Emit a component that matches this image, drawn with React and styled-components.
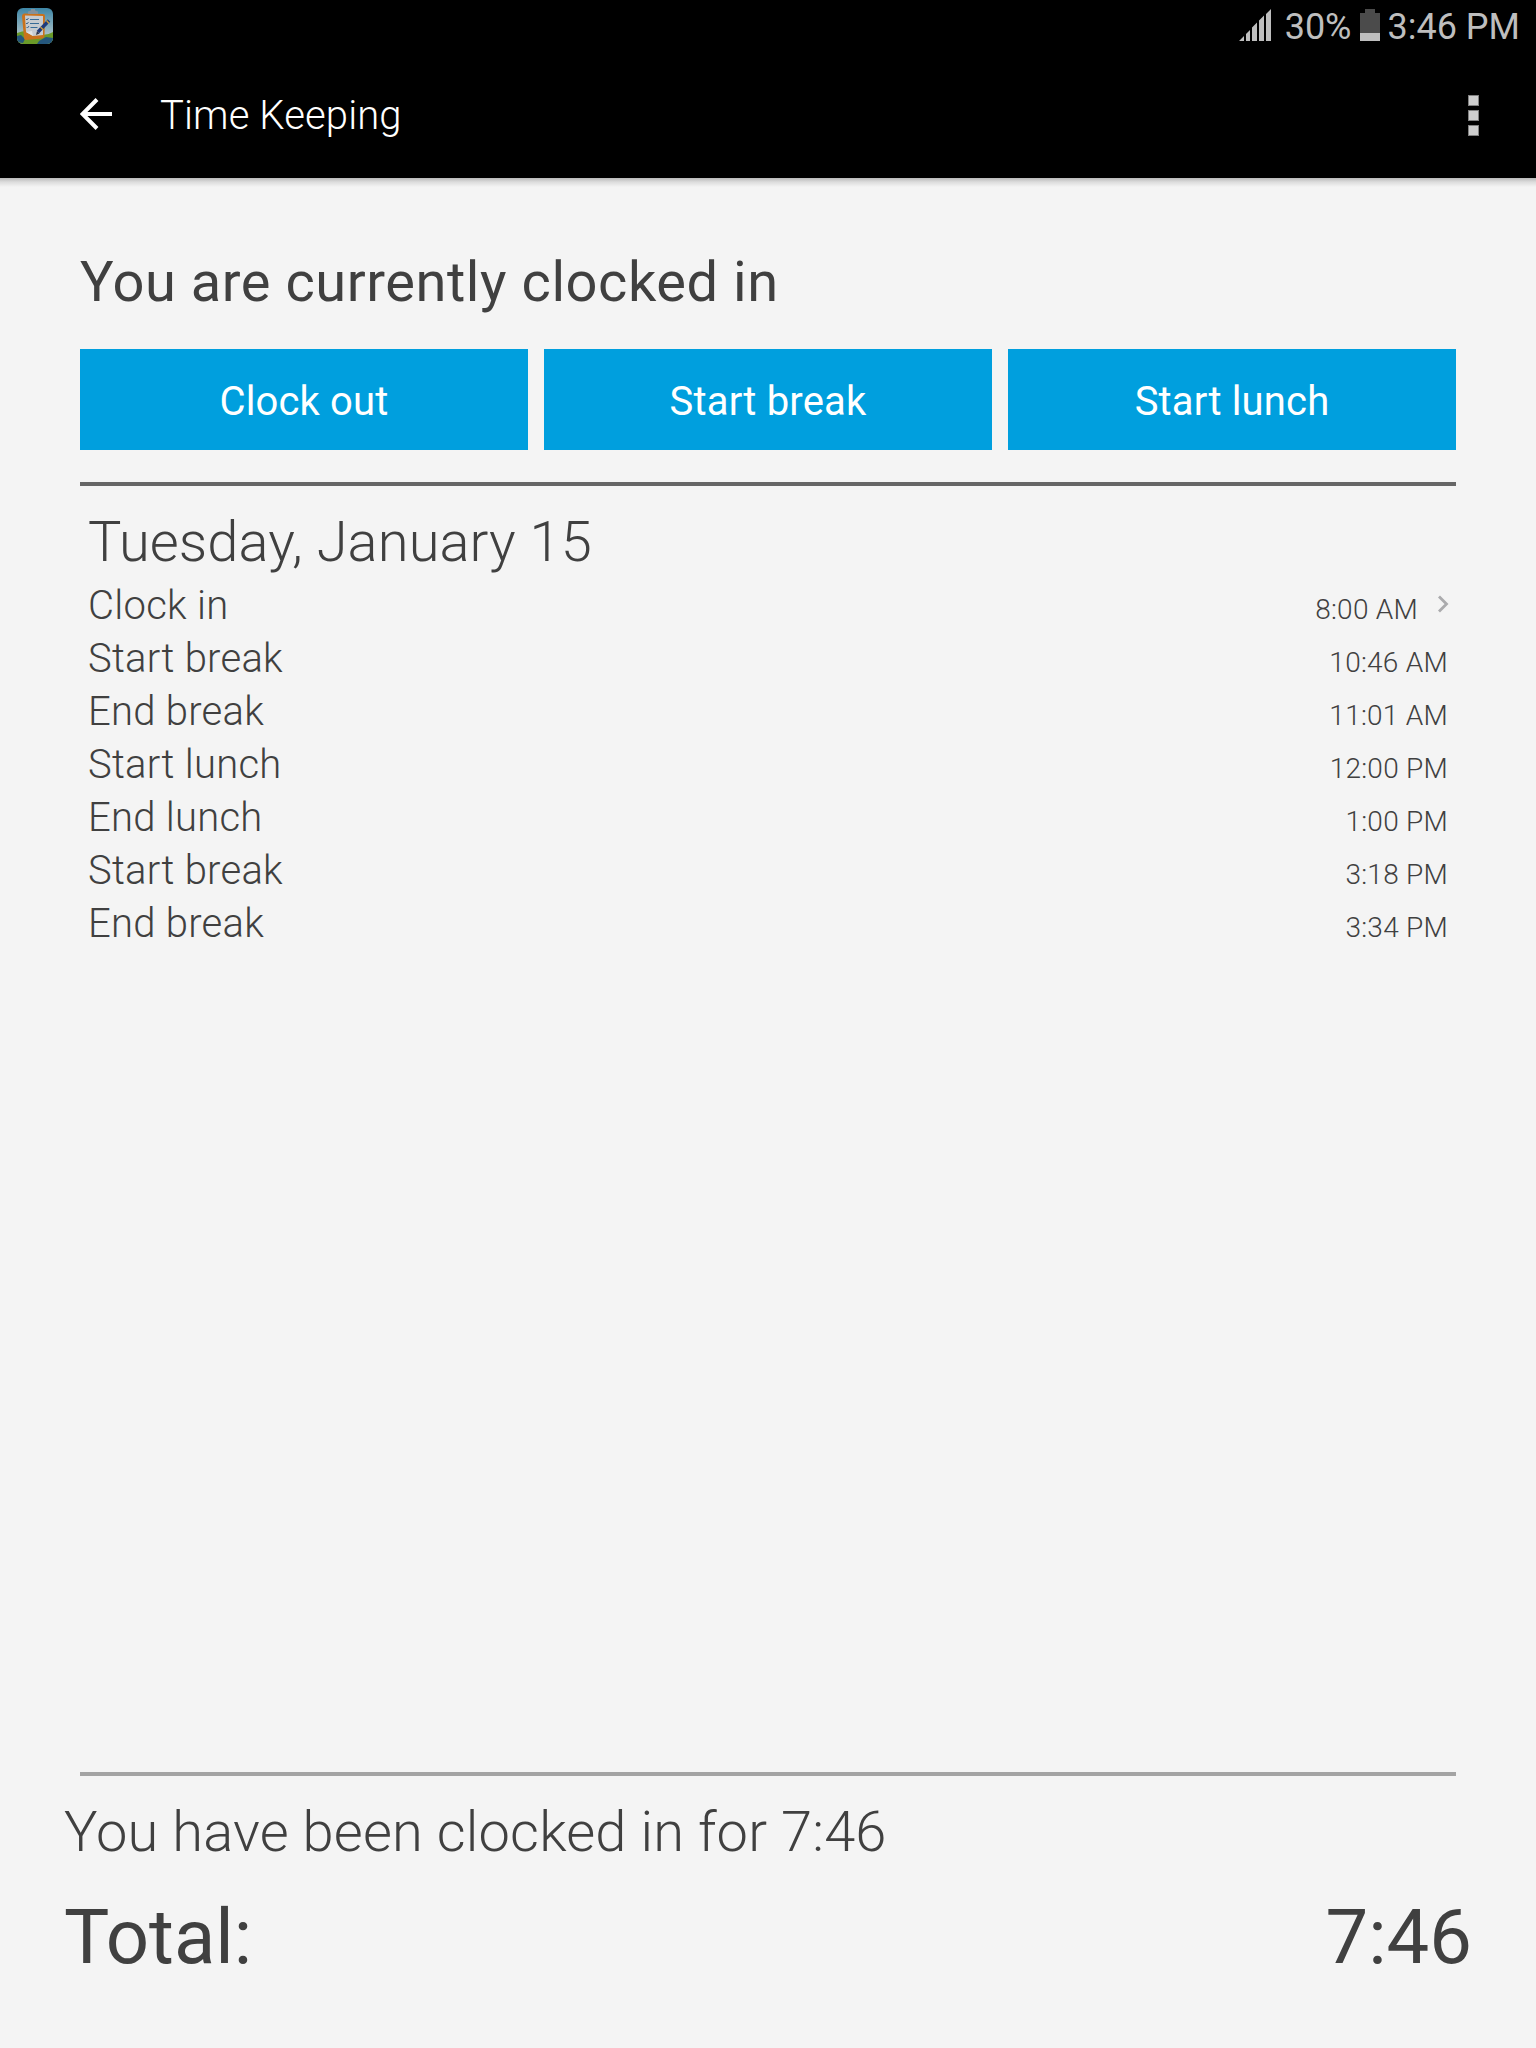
import React from "react";
import styled, { createGlobalStyle } from "styled-components";

const GlobalStyle = createGlobalStyle`
  * { box-sizing: border-box; }
  body { margin: 0; background: #f4f4f4; }
`;

const Screen = styled.div`
  width: 1536px;
  height: 2048px;
  display: flex;
  flex-direction: column;
  background: #f4f4f4;
  color: #404040;
  font-family: Roboto, "Liberation Sans", sans-serif;
  font-weight: 400;
  overflow: hidden;
`;

const StatusBar = styled.header`
  height: 53px;
  flex: none;
  display: flex;
  justify-content: space-between;
  padding: 0 16px 0 17px;
  background: #000;
  color: #bebebe;
  font-size: 36px;
  line-height: 54px;
  white-space: nowrap;
`;

const StatusGroup = styled.div`
  display: flex;
  align-items: flex-start;
`;

const StatusIcon = styled.svg`
  display: block;
  flex: none;
  margin: ${(p) => p.$margin};
`;

const AppBar = styled.nav`
  height: 125px;
  flex: none;
  display: flex;
  align-items: flex-start;
  padding: 42px 57px 0 80px;
  background: #000;
  color: #fff;
`;

const BackIcon = styled.svg`
  display: block;
  margin-top: 3px;
`;

const Title = styled.h1`
  flex: 1;
  margin: 0 0 0 48px;
  font-size: 40px;
  font-weight: 300;
  line-height: 41px;
  letter-spacing: 0.12px;
`;

const Overflow = styled.div`
  display: grid;
  gap: 4px;
`;

const OverflowDot = styled.i`
  width: 11px;
  height: 11px;
  background: #cecece;
  border: 1px solid #808080;
`;

const Content = styled.main`
  flex: 1;
  display: flex;
  flex-direction: column;
  padding: 71px 80px 0;
  background: linear-gradient(#b8b8b8, #dcdcdc 4px, #f4f4f4 9px);
`;

const Heading = styled.h2`
  margin: 0 0 34px;
  font-size: 56px;
  font-weight: 400;
  line-height: 66px;
  letter-spacing: 0.55px;
`;

const Actions = styled.div`
  display: grid;
  grid-template-columns: repeat(3, 1fr);
  gap: 16px;
  margin-bottom: 32px;
`;

const ActionButton = styled.button`
  height: 101px;
  border: 0;
  padding: 3px 0 0;
  background: #009fde;
  color: #fff;
  font: 400 40px Roboto, "Liberation Sans", sans-serif;
  letter-spacing: 0.16px;
`;

const Divider = styled.hr`
  width: 100%;
  height: 4px;
  flex: none;
  margin: 0;
  border: 0;
  background: ${(p) => p.$color};
`;

const Log = styled.section`
  flex: 1;
  padding: 23px 8px 0;
  font-weight: 300;
`;

const LogDate = styled.h3`
  margin: 0 0 4px;
  font-size: 56px;
  font-weight: 300;
  line-height: 66px;
  letter-spacing: 0.1px;
`;

const LogRow = styled.div`
  height: 53px;
  display: flex;
  align-items: baseline;
  font-size: 40px;
  line-height: 53px;
  letter-spacing: 0.26px;
`;

const LogTime = styled.span`
  margin-left: auto;
  font-size: 28px;
`;

const Chevron = styled.svg`
  align-self: flex-start;
  margin: 16px -1px 0 20px;
`;

const Summary = styled.footer`
  height: 272px;
  flex: none;
  padding: 23px 64px 0;
`;

const Elapsed = styled.p`
  margin: 0 0 27px;
  font-size: 56px;
  font-weight: 300;
  line-height: 66px;
  letter-spacing: 0.16px;
`;

const Total = styled.div`
  display: flex;
  justify-content: space-between;
  font-size: 76px;
  line-height: 90px;
`;

const entries = [
  { label: "Clock in", time: "8:00 AM", linked: true },
  { label: "Start break", time: "10:46 AM" },
  { label: "End break", time: "11:01 AM" },
  { label: "Start lunch", time: "12:00 PM" },
  { label: "End lunch", time: "1:00 PM" },
  { label: "Start break", time: "3:18 PM" },
  { label: "End break", time: "3:34 PM" },
];

function ClipboardIcon() {
  return (
    <StatusIcon $margin="8px 0 0" width="36" height="36" viewBox="0 0 36 36">
      <defs>
        <linearGradient id="sky" x1="0" y1="0" x2="0" y2="1">
          <stop offset="0" stopColor="#3d86a6" />
          <stop offset="0.7" stopColor="#a3bcc4" />
        </linearGradient>
        <clipPath id="tile"><rect width="36" height="36" rx="6" /></clipPath>
      </defs>
      <g clipPath="url(#tile)">
        <rect width="36" height="36" fill="url(#sky)" />
        <path d="M0 25Q10 21 19 25T36 24V36H0Z" fill="#6a9a28" />
        <path d="M0 28l4-1 4 4-2 4-6-1ZM22 33l7-4 7 1v6H20Z" fill="#24567c" />
        <path d="M7 5.500L26 6Q28 6 28 8L27.500 28Q27 30 25 30.500L9 32Q7 32 7 30L5 8Q5 6 7 5.500Z" fill="#c9721c" />
        <path d="M8 7.500L26 8 26 27 16 28 9 24Z" fill="#c6cbd0" />
        <path d="M9 24l6-1 1 5Z" fill="#e1e3e4" />
        <path d="M11 6V3.500l3-1V1h4v1.500l3 1V6Z" fill="#83919b" />
        <path d="M13 11.500h9M13 15.500h9M13.500 19.500h7" stroke="#376b97" strokeWidth="1" />
        <path d="M9 11l1 1 1.500-2M9 15l1 1 1.500-2M9.500 19l1 1 1.500-2" stroke="#214f7c" strokeWidth="0.800" fill="none" />
        <path d="M21 24L32 12.500" stroke="#1e3a7b" strokeWidth="3.400" />
        <path d="M29.500 12.500l2.500 3M23.500 19l3 3" stroke="#c99b38" strokeWidth="1.300" />
        <path d="M19 27l1-4 2.500 2.500Z" fill="#303547" />
      </g>
    </StatusIcon>
  );
}

export default function App() {
  return (
    <Screen>
      <GlobalStyle />
      <StatusBar>
        <ClipboardIcon />
        <StatusGroup>
          <StatusIcon $margin="9px 13px 0 0" width="33" height="32" viewBox="0 0 33 32" fill="#bebebe">
            <path d="M0 32L5 27V32ZM7 32V25L11 21V32ZM13 32V18.500L18 13.500V32ZM20 32V11.500L25 6.500V32ZM27 32V5L32 0V32Z" />
          </StatusIcon>
          <span>30%</span>
          <StatusIcon $margin="9px 8px 0 8px" width="20" height="32" viewBox="0 0 20 32">
            <path d="M5 0h10v4h5v20H0V4h5Z" fill="#4b4b4b" />
            <rect y="24" width="20" height="8" fill="#bebebe" />
          </StatusIcon>
          <span>3:46 PM</span>
        </StatusGroup>
      </StatusBar>
      <AppBar>
        <BackIcon width="32" height="32" viewBox="0 0 32 32" fill="none" stroke="#fff" strokeWidth="4">
          <path d="M32 16H3M17 1.500L2.500 16L17 30.500" />
        </BackIcon>
        <Title>Time Keeping</Title>
        <Overflow>
          <OverflowDot />
          <OverflowDot />
          <OverflowDot />
        </Overflow>
      </AppBar>
      <Content>
        <Heading>You are currently clocked in</Heading>
        <Actions>
          <ActionButton>Clock out</ActionButton>
          <ActionButton>Start break</ActionButton>
          <ActionButton>Start lunch</ActionButton>
        </Actions>
        <Divider $color="#666" />
        <Log>
          <LogDate>Tuesday, January 15</LogDate>
          {entries.map((entry, i) => (
            <LogRow key={i}>
              <span>{entry.label}</span>
              <LogTime>{entry.time}</LogTime>
              {entry.linked && (
                <Chevron width="11" height="18" viewBox="0 0 11 18" fill="none" stroke="#ababad" strokeWidth="2.800">
                  <path d="M1 1.500L8.500 9L1 16.500" />
                </Chevron>
              )}
            </LogRow>
          ))}
        </Log>
        <Divider $color="#a3a3a3" />
      </Content>
      <Summary>
        <Elapsed>You have been clocked in for 7:46</Elapsed>
        <Total>
          <span>Total:</span>
          <span>7:46</span>
        </Total>
      </Summary>
    </Screen>
  );
}
